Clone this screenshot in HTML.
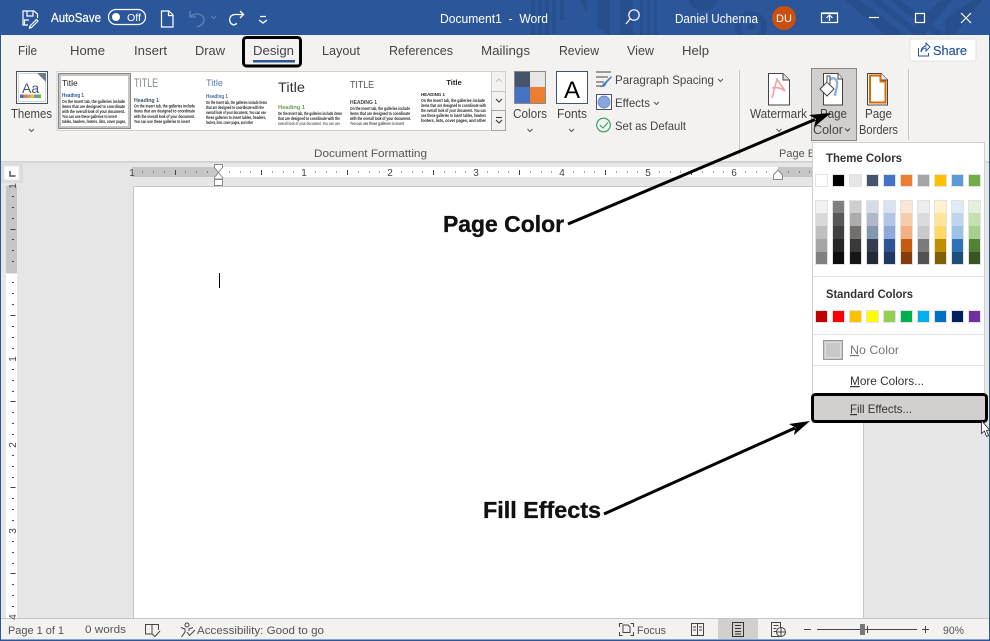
<!DOCTYPE html>
<html><head><meta charset="utf-8"><title>Word</title>
<style>
html,body{margin:0;padding:0;width:990px;height:641px;overflow:hidden;background:#e6e6e6}
svg{position:absolute;left:0;top:0;display:block}
text{font-family:"Liberation Sans",sans-serif;white-space:pre}
.t{font-size:13px;fill:#444}
.w{font-size:12.5px;fill:#fff}
.s{font-size:11px;fill:#555}
.g{font-size:4.3px;fill:#222;font-weight:bold}
.m{font-size:12px;fill:#444}
.n{font-size:10px;fill:#444}
.b{font-size:12px;fill:#333;font-weight:bold}
.a{font-size:23px;fill:#111;font-weight:bold;stroke:#111;stroke-width:.35}
</style></head><body>
<svg width="990" height="641" viewBox="0 0 990 641" xmlns="http://www.w3.org/2000/svg">
<!-- backgrounds -->
<rect width="990" height="641" fill="#e6e6e6"/>
<rect width="990" height="35" fill="#2b579a"/>

<!-- title bar pattern -->
<g fill="#284f8d">
<rect x="531" y="0" width="4" height="35"/><rect x="538" y="0" width="4" height="35"/><rect x="545" y="0" width="4" height="35"/><rect x="552" y="0" width="4" height="33"/><rect x="560" y="0" width="4" height="20"/>
<polygon points="580,0 587,0 587,14"/><polygon points="597,0 610,0 610,35 597,28"/>
<rect x="620" y="0" width="13" height="35"/><rect x="640" y="0" width="3" height="35"/><rect x="647" y="0" width="3" height="35"/><rect x="654" y="0" width="3" height="35"/>
<ellipse cx="703" cy="0" rx="14" ry="11"/>
<polygon points="845,0 860,0 905,35 885,35"/><polygon points="870,0 880,0 925,35 915,35"/><polygon points="890,0 900,0 945,35 935,35"/>
<polygon points="915,20 942,0 952,0 925,35 915,35"/><polygon points="945,20 972,0 982,0 955,35 945,35"/>
</g>
<circle cx="751" cy="27" r="13" fill="none" stroke="#284f8d" stroke-width="6"/>
<circle cx="751" cy="27" r="4" fill="#284f8d"/>

<rect y="35" width="990" height="126" fill="#f3f2f1"/>
<rect y="161" width="990" height="2" fill="#d4d4d4"/>
<rect y="618" width="990" height="23" fill="#f3f2f1"/>
<rect y="618" width="990" height="1" fill="#c6c6c6"/>
<rect y="639.5" width="990" height="1.5" fill="#2b579a"/>
<rect y="35" width="1" height="606" fill="#2b579a"/>
<rect x="989" y="35" width="1" height="606" fill="#2b579a"/>

<!-- title bar icons -->
<g fill="none" stroke="#fff" stroke-width="1.2">
<path d="M28 25H23V11H34L37.5 14V18M27 11V16H33V11M24.500 25V20H29"/>
<path d="M30 26L36.500 19.500L38 21L31.500 27.500L29.500 28Z"/>
<rect x="108.500" y="9.500" width="37" height="15" rx="7.500"/>
<path d="M161.500 11H169L173 15V27H161.500ZM168.500 11V15.500H173"/>
<path d="M232 13L228.500 16.500L232 20M229 16.500H237C244 16.500 244 26 238 27L235 25.500" stroke-width="1.300" transform="matrix(-1 0 0 1 472 -2)"/>
<path d="M260 16.500h6M259 20l4 3l4-3" stroke-width="1.300"/>
<circle cx="634" cy="15" r="5.200"/><path d="M630 19L626 24"/>
<rect x="821.500" y="13.500" width="16" height="9"/><path d="M821 13h17M829.500 21v-6M826.500 18l3-3l3 3"/>
<path d="M869 17.500h10"/>
<rect x="915.500" y="13.500" width="9" height="9"/>
<path d="M961 13l10 10M971 13l-10 10"/>
</g>
<circle cx="116" cy="17" r="4" fill="#fff"/>
<path d="M190 11v6h6M190 17C194 12 204 13 204 20C204 24 200 26 197 27" fill="none" stroke="#5e82b8" stroke-width="1.300"/>
<path d="M211 16l2.500 2.500l2.500-2.500" fill="none" stroke="#5e82b8"/>
<text x="51" y="22" class="w" textLength="50" lengthAdjust="spacingAndGlyphs" style="font-size:12.500px;stroke:#fff;stroke-width:.2">AutoSave</text>
<text x="127" y="21" style="font-size:10px;fill:#fff" textLength="14" lengthAdjust="spacingAndGlyphs">Off</text>
<text x="440" y="23" class="w" textLength="108" lengthAdjust="spacingAndGlyphs" xml:space="preserve">Document1  -  Word</text>
<text x="675" y="23" class="w" textLength="83" lengthAdjust="spacingAndGlyphs">Daniel Uchenna</text>
<circle cx="784" cy="18" r="12" fill="#ca5010"/>
<text x="784" y="22" text-anchor="middle" style="font-size:11px;fill:#fff">DU</text>

<!-- tabs -->
<text x="18" y="55" class="t" textLength="19" lengthAdjust="spacingAndGlyphs">File</text>
<text x="70" y="55" class="t" textLength="35" lengthAdjust="spacingAndGlyphs">Home</text>
<text x="134" y="55" class="t" textLength="33" lengthAdjust="spacingAndGlyphs">Insert</text>
<text x="195" y="55" class="t" textLength="30" lengthAdjust="spacingAndGlyphs">Draw</text>
<text x="253" y="55" class="t" textLength="41" lengthAdjust="spacingAndGlyphs">Design</text>
<text x="322" y="55" class="t" textLength="38" lengthAdjust="spacingAndGlyphs">Layout</text>
<text x="389" y="55" class="t" textLength="64" lengthAdjust="spacingAndGlyphs">References</text>
<text x="481" y="55" class="t" textLength="49" lengthAdjust="spacingAndGlyphs">Mailings</text>
<text x="559" y="55" class="t" textLength="40" lengthAdjust="spacingAndGlyphs">Review</text>
<text x="627" y="55" class="t" textLength="27" lengthAdjust="spacingAndGlyphs">View</text>
<text x="682" y="55" class="t" textLength="27" lengthAdjust="spacingAndGlyphs">Help</text>
<rect x="253" y="60" width="42" height="2.500" fill="#2b579a"/>
<rect x="243.500" y="37.500" width="57" height="28.500" rx="3" fill="none" stroke="#000" stroke-width="3"/>
<rect x="910" y="39" width="66" height="22" rx="2" fill="#fff" stroke="#e4e2e0"/>
<path d="M918.500 48v8h10v-3M921 52c0-4 3-6 5-6v-3l4 4l-4 4v-3c-2 0-4 1-5 4Z" fill="none" stroke="#2b579a"/>
<text x="933" y="55" class="t" textLength="34" lengthAdjust="spacingAndGlyphs" style="fill:#2b579a;font-size:13px;stroke:#2b579a;stroke-width:.2">Share</text>

<!-- Themes -->
<rect x="16.500" y="71.500" width="31" height="32" fill="#fff" stroke="#44546a"/>
<rect x="18.500" y="73.500" width="27" height="28" fill="none" stroke="#d5d5d5"/>
<polygon points="37,73 46,73 46,82" fill="#6b7a90"/>
<text x="22" y="93" style="font-size:14px;fill:#44546a">Aa</text>
<g><rect x="20" y="94.500" width="3.500" height="3.500" fill="#4472c4"/><rect x="23.500" y="94.500" width="3.500" height="3.500" fill="#ed7d31"/><rect x="27" y="94.500" width="3.500" height="3.500" fill="#a5a5a5"/><rect x="30.500" y="94.500" width="3.500" height="3.500" fill="#ffc000"/><rect x="34" y="94.500" width="3.500" height="3.500" fill="#5b9bd5"/><rect x="37.500" y="94.500" width="3.500" height="3.500" fill="#70ad47"/></g>
<text x="11" y="118" class="t" textLength="41" lengthAdjust="spacingAndGlyphs">Themes</text>
<path d="M29 129l2.500 2.500l2.500-2.500" fill="none" stroke="#555"/>

<!-- gallery -->
<rect x="57" y="71.500" width="435" height="59" fill="#fff" stroke="#d2d0ce"/>
<rect x="59.500" y="74.500" width="70" height="53" fill="none" stroke="#c4c4c4" stroke-width="3"/>
<rect x="58.500" y="73.500" width="72" height="55" fill="none" stroke="#8a8886"/>
<!-- 1 -->
<text x="62" y="86" style="font-size:8.500px;fill:#222">Title</text>
<text x="62" y="97" style="font-size:5px;fill:#2f5496;font-weight:bold" textLength="22" lengthAdjust="spacingAndGlyphs">Heading 1</text>
<text x="62" y="103" class="g" textLength="63" lengthAdjust="spacingAndGlyphs">On the Insert tab, the galleries include</text>
<text x="62" y="108" class="g" textLength="63" lengthAdjust="spacingAndGlyphs">items that are designed to coordinate</text>
<text x="62" y="113" class="g" textLength="63" lengthAdjust="spacingAndGlyphs">with the overall look of your document.</text>
<text x="62" y="118" class="g" textLength="55" lengthAdjust="spacingAndGlyphs">You can use these galleries to insert</text>
<text x="62" y="123" class="g" textLength="64" lengthAdjust="spacingAndGlyphs">tables, headers, footers, lists, cover pages,</text>
<!-- 2 -->
<text x="134" y="87" style="font-size:11.500px;fill:#808890" textLength="24" lengthAdjust="spacingAndGlyphs">TITLE</text>
<text x="134" y="102" style="font-size:5.200px;fill:#44546a;font-weight:bold" textLength="25" lengthAdjust="spacingAndGlyphs">Heading 1</text>
<text x="134" y="107.500" class="g" textLength="61" lengthAdjust="spacingAndGlyphs">On the Insert tab, the galleries include</text>
<text x="134" y="112.500" class="g" textLength="61" lengthAdjust="spacingAndGlyphs">items that are designed to coordinate</text>
<text x="134" y="118" class="g" textLength="61" lengthAdjust="spacingAndGlyphs">with the overall look of your document.</text>
<text x="134" y="123" class="g" textLength="56" lengthAdjust="spacingAndGlyphs">You can use these galleries to insert</text>
<!-- 3 -->
<text x="206" y="86" style="font-size:9px;fill:#5b7db5" textLength="17" lengthAdjust="spacingAndGlyphs">Title</text>
<text x="206" y="98" style="font-size:5px;fill:#4a6da7;font-weight:bold" textLength="22" lengthAdjust="spacingAndGlyphs">Heading 1</text>
<text x="206" y="104" class="g" textLength="61" lengthAdjust="spacingAndGlyphs">On the Insert tab, the galleries include items</text>
<text x="206" y="109" class="g" textLength="58" lengthAdjust="spacingAndGlyphs">that are designed to coordinate with the</text>
<text x="206" y="114" class="g" textLength="60" lengthAdjust="spacingAndGlyphs">overall look of your document. You can use</text>
<text x="206" y="119" class="g" textLength="60" lengthAdjust="spacingAndGlyphs">these galleries to insert tables, headers,</text>
<text x="206" y="124" class="g" textLength="47" lengthAdjust="spacingAndGlyphs">footers, lists, cover pages, and other</text>
<!-- 4 -->
<text x="278" y="92" style="font-size:14px;fill:#333" textLength="27" lengthAdjust="spacingAndGlyphs">Title</text>
<text x="278" y="109" style="font-size:5.500px;fill:#6a9a4f;font-weight:bold" textLength="27" lengthAdjust="spacingAndGlyphs">Heading 1</text>
<text x="278" y="115" class="g" textLength="64" lengthAdjust="spacingAndGlyphs">On the Insert tab, the galleries include items</text>
<text x="278" y="120" class="g" textLength="62" lengthAdjust="spacingAndGlyphs">that are designed to coordinate with the</text>
<text x="278" y="125" class="g" textLength="62" lengthAdjust="spacingAndGlyphs" opacity=".7">overall look of your document. You can use</text>
<!-- 5 -->
<text x="350" y="88" style="font-size:10.500px;fill:#555" textLength="24" lengthAdjust="spacingAndGlyphs">TITLE</text>
<text x="350" y="104" style="font-size:5.200px;fill:#444;font-weight:bold" textLength="27" lengthAdjust="spacingAndGlyphs">HEADING 1</text>
<text x="350" y="110" class="g" textLength="60" lengthAdjust="spacingAndGlyphs">On the Insert tab, the galleries include</text>
<text x="350" y="115" class="g" textLength="60" lengthAdjust="spacingAndGlyphs">items that are designed to coordinate</text>
<text x="350" y="120" class="g" textLength="61" lengthAdjust="spacingAndGlyphs">with the overall look of your document.</text>
<text x="350" y="125" class="g" textLength="54" lengthAdjust="spacingAndGlyphs" opacity=".8">You can use these galleries to insert</text>
<!-- 6 -->
<text x="454" y="85" text-anchor="middle" style="font-size:7.500px;fill:#222;font-weight:bold">Title</text>
<text x="421" y="96" style="font-size:4.500px;fill:#222;font-weight:bold" textLength="24" lengthAdjust="spacingAndGlyphs">HEADING 1</text>
<text x="421" y="102" class="g" textLength="64" lengthAdjust="spacingAndGlyphs">On the Insert tab, the galleries include</text>
<text x="421" y="107" class="g" textLength="65" lengthAdjust="spacingAndGlyphs">items that are designed to coordinate with</text>
<text x="421" y="112" class="g" textLength="65" lengthAdjust="spacingAndGlyphs">the overall look of your document. You can</text>
<text x="421" y="117" class="g" textLength="65" lengthAdjust="spacingAndGlyphs">use these galleries to insert tables, headers</text>
<text x="421" y="122" class="g" textLength="65" lengthAdjust="spacingAndGlyphs">footers, lists, cover pages, and other</text>
<!-- scroll -->
<rect x="491.500" y="71.500" width="14" height="20" fill="#f3f2f1" stroke="#d2d0ce"/>
<rect x="491.500" y="91.500" width="14" height="19" fill="#f3f2f1" stroke="#c4c4c4"/>
<rect x="491.500" y="110.500" width="14" height="20" fill="#f3f2f1" stroke="#a5a5a5"/>
<path d="M496 82l3-3l3 3" fill="none" stroke="#c2c2c2"/>
<path d="M496 99l3 3l3-3M496 117.500h6M496 120l3 3l3-3" fill="none" stroke="#333"/>
<text x="314" y="157" class="s" textLength="113" lengthAdjust="spacingAndGlyphs">Document Formatting</text>

<!-- Colors / Fonts -->
<rect x="514" y="71" width="16" height="16" fill="#44546a"/><rect x="530" y="71" width="16" height="16" fill="#e7e6e6"/>
<rect x="514" y="87" width="16" height="16" fill="#4472c4"/><rect x="530" y="87" width="16" height="16" fill="#ed7d31"/>
<rect x="514.500" y="71.500" width="31" height="32" fill="none" stroke="#8a8a8a"/>
<text x="513" y="118" class="t" textLength="34" lengthAdjust="spacingAndGlyphs">Colors</text>
<path d="M527.500 129l2.500 2.500l2.500-2.500" fill="none" stroke="#555"/>
<rect x="556.500" y="71.500" width="31" height="32" fill="#fff" stroke="#44546a"/>
<text x="572" y="98" text-anchor="middle" style="font-size:24px;fill:#000">A</text>
<text x="557" y="118" class="t" textLength="30" lengthAdjust="spacingAndGlyphs">Fonts</text>
<path d="M569 129l2.500 2.500l2.500-2.500" fill="none" stroke="#555"/>

<!-- Paragraph spacing etc -->
<path d="M596 72h15M596 77h12M596 82h8M596 86h5" fill="none" stroke="#444"/>
<path d="M611 76L604 83L600 87L602 87C604 87 606 86 606 84L612 77Z" fill="#4a80c8"/>
<text x="615" y="84" class="m" textLength="99" lengthAdjust="spacingAndGlyphs">Paragraph Spacing</text>
<path d="M718 79l2.500 2.500l2.500-2.500" fill="none" stroke="#555"/>
<rect x="596.500" y="94.500" width="15" height="15" fill="#fff" stroke="#44546a"/>
<circle cx="604" cy="102" r="6" fill="#8ba4dc" stroke="#5b7fc7" stroke-width=".7"/>
<text x="615" y="107" class="m" textLength="35" lengthAdjust="spacingAndGlyphs">Effects</text>
<path d="M654 102l2.500 2.500l2.500-2.500" fill="none" stroke="#555"/>
<circle cx="603.500" cy="125" r="6.800" fill="none" stroke="#2e9e5b" stroke-width="1.100"/>
<path d="M600 125l3 3l5-5.500" fill="none" stroke="#2e9e5b"/>
<text x="615" y="130" class="m" textLength="71" lengthAdjust="spacingAndGlyphs">Set as Default</text>

<!-- separators -->
<path d="M739.500 70v85M908.500 69v71" stroke="#c8c6c4" fill="none"/>

<!-- Watermark -->
<path d="M768.500 73.500H783L789.500 80V105H768.500Z" fill="#fff" stroke="#444"/>
<path d="M783 73.500V80H789.500" fill="#ddd" stroke="#444"/>
<path d="M772 98L777 79L785 91C781 88 776 87 772 88" fill="none" stroke="#f4a0ac" stroke-width="1.600"/>
<text x="750" y="118" class="t" textLength="57" lengthAdjust="spacingAndGlyphs">Watermark</text>
<path d="M776.500 129l2.500 2.500l2.500-2.500" fill="none" stroke="#555"/>
<text x="779" y="157" class="s">Page Background</text>

<!-- Page Color -->
<rect x="811.500" y="68.500" width="45" height="72" fill="#d2d0ce" stroke="#8a8886"/>
<path d="M823.500 73.500H838L842.500 79V105H823.500Z" fill="#fff" stroke="#444"/>
<path d="M838 73.500V79H842.500" fill="#eee" stroke="#444"/>
<path d="M827 83C829 78 836 76 837 82C838 87 835 92 835 96" fill="none" stroke="#8cb6df" stroke-width="2.500"/>
<path d="M820 89L827 82L834 89L827 96Z" fill="#fff" stroke="#444"/>
<path d="M827 82V76h3v8" fill="#fff" stroke="#444"/>
<text x="820" y="118" class="t" textLength="27" lengthAdjust="spacingAndGlyphs">Page</text>
<text x="813" y="134" class="t" textLength="30" lengthAdjust="spacingAndGlyphs">Color</text>
<path d="M845 128.500l2.500 2.500l2.500-2.500" fill="none" stroke="#444"/>

<!-- Page Borders -->
<path d="M867.500 73.500H881L887.500 80V105H867.500Z" fill="#fff" stroke="#444"/>
<path d="M881 73.500V80H887.500" fill="#eee" stroke="#444"/>
<path d="M870 102.500V75.500H880.500V81.500H885.500V102.500Z" fill="none" stroke="#d86a00" stroke-width="2"/>
<text x="865" y="118" class="t" textLength="27" lengthAdjust="spacingAndGlyphs">Page</text>
<text x="859" y="134" class="t" textLength="39" lengthAdjust="spacingAndGlyphs">Borders</text>

<!-- tab selector -->
<rect x="1" y="162" width="22" height="21" fill="#dcdcdc"/>
<rect x="4" y="166" width="15" height="14" fill="#fff" stroke="#e6e6e6"/>
<path d="M10 171v5h5.500" fill="none" stroke="#555" stroke-width="1.500"/>

<!-- horizontal ruler -->
<rect x="132" y="167" width="86" height="10" fill="#c6c6c6"/>
<rect x="218" y="167" width="560" height="10" fill="#fff"/>
<rect x="778" y="167" width="40" height="10" fill="#c6c6c6"/>
<path fill="none" stroke="#444" d="M142 172h1M153 172h1M164 172h1M185 172h1M196 172h1M207 172h1M229 172h1M240 172h1M250 172h1M272 172h1M283 172h1M293 172h1M315 172h1M326 172h1M336 172h1M358 172h1M369 172h1M379 172h1M401 172h1M412 172h1M422 172h1M444 172h1M455 172h1M465 172h1M487 172h1M498 172h1M508 172h1M530 172h1M541 172h1M551 172h1M573 172h1M584 172h1M594 172h1M616 172h1M627 172h1M637 172h1M659 172h1M670 172h1M680 172h1M702 172h1M713 172h1M723 172h1M745 172h1M756 172h1M766 172h1M788 172h1M799 172h1M809 172h1"/>
<path fill="none" stroke="#444" d="M175.500 170v5M261.500 170v5M347.500 170v5M433.500 170v5M519.500 170v5M605.500 170v5M691.500 170v5"/>
<g class="n">
<text x="132" y="176" class="n" text-anchor="middle">1</text>
<text x="304" y="176" class="n" text-anchor="middle">1</text>
<text x="390" y="176" class="n" text-anchor="middle">2</text>
<text x="476" y="176" class="n" text-anchor="middle">3</text>
<text x="562" y="176" class="n" text-anchor="middle">4</text>
<text x="648" y="176" class="n" text-anchor="middle">5</text>
<text x="734" y="176" class="n" text-anchor="middle">6</text>
</g>
<path d="M214.500 164.500h8v3l-4 5l-4-5ZM218.500 172.500l4 5v1.500h-8V177.500Z" fill="#fff" stroke="#8a8a8a"/>
<rect x="214.500" y="179.500" width="8" height="6" fill="#fff" stroke="#8a8a8a"/>
<path d="M773.500 179.500V175L778 170L782.500 175V179.500Z" fill="#fff" stroke="#8a8a8a"/>

<!-- vertical ruler -->
<rect x="6" y="186" width="11" height="87" fill="#c6c6c6"/>
<rect x="6" y="274" width="11" height="344" fill="#fff"/>
<path fill="none" stroke="#444" d="M12 196.500h2M12 207.500h2M12 218.500h2M12 239.500h2M12 250.500h2M12 261.500h2M12 282.500h2M12 293.500h2M12 304.500h2M12 326.500h2M12 337.500h2M12 348.500h2M12 369.500h2M12 380.500h2M12 391.500h2M12 412.500h2M12 423.500h2M12 434.500h2M12 455.500h2M12 466.500h2M12 477.500h2M12 498.500h2M12 509.500h2M12 520.500h2M12 541.500h2M12 552.500h2M12 563.500h2M12 584.500h2M12 595.500h2M12 606.500h2"/>
<path fill="none" stroke="#444" d="M10.500 229.500h5M10.500 315.500h5M10.500 401.500h5M10.500 487.500h5M10.500 573.500h5"/>
<g>
<text transform="translate(16,186) rotate(-90)" class="n" text-anchor="middle">1</text>
<text transform="translate(16,359) rotate(-90)" class="n" text-anchor="middle">1</text>
<text transform="translate(16,445) rotate(-90)" class="n" text-anchor="middle">2</text>
<text transform="translate(16,531) rotate(-90)" class="n" text-anchor="middle">3</text>
<text transform="translate(16,617) rotate(-90)" class="n" text-anchor="middle">4</text>
</g>

<!-- page -->
<rect x="133.500" y="186.500" width="730" height="432" fill="#fff" stroke="#c6c6c6"/>
<rect x="219" y="273" width="1" height="15" fill="#000"/>

<!-- dropdown menu -->
<rect x="812.500" y="142.500" width="172" height="280" fill="#fff" stroke="#d2d0ce"/>
<text x="826" y="162" class="b" textLength="76" lengthAdjust="spacingAndGlyphs">Theme Colors</text>
<g stroke="#e2e2e2">
<rect x="815.500" y="174.500" width="12" height="12" fill="#fff"/>
<rect x="832.500" y="174.500" width="12" height="12" fill="#000"/>
<rect x="849.500" y="174.500" width="12" height="12" fill="#e7e6e6"/>
<rect x="866.500" y="174.500" width="12" height="12" fill="#44546a"/>
<rect x="883.500" y="174.500" width="12" height="12" fill="#4472c4"/>
<rect x="900.500" y="174.500" width="12" height="12" fill="#ed7d31"/>
<rect x="917.500" y="174.500" width="12" height="12" fill="#a5a5a5"/>
<rect x="934.500" y="174.500" width="12" height="12" fill="#ffc000"/>
<rect x="951.500" y="174.500" width="12" height="12" fill="#5b9bd5"/>
<rect x="968.500" y="174.500" width="12" height="12" fill="#70ad47"/>
</g>
<g>
<rect x="815" y="200" width="13" height="13" fill="#f2f2f2"/><rect x="815" y="213" width="13" height="13" fill="#d9d9d9"/><rect x="815" y="226" width="13" height="13" fill="#bfbfbf"/><rect x="815" y="239" width="13" height="13" fill="#a6a6a6"/><rect x="815" y="252" width="13" height="13" fill="#808080"/>
<rect x="832" y="200" width="13" height="13" fill="#7f7f7f"/><rect x="832" y="213" width="13" height="13" fill="#595959"/><rect x="832" y="226" width="13" height="13" fill="#404040"/><rect x="832" y="239" width="13" height="13" fill="#262626"/><rect x="832" y="252" width="13" height="13" fill="#0d0d0d"/>
<rect x="849" y="200" width="13" height="13" fill="#d0cece"/><rect x="849" y="213" width="13" height="13" fill="#aeabab"/><rect x="849" y="226" width="13" height="13" fill="#757070"/><rect x="849" y="239" width="13" height="13" fill="#3a3838"/><rect x="849" y="252" width="13" height="13" fill="#171616"/>
<rect x="866" y="200" width="13" height="13" fill="#d6dce5"/><rect x="866" y="213" width="13" height="13" fill="#adb9ca"/><rect x="866" y="226" width="13" height="13" fill="#8497b0"/><rect x="866" y="239" width="13" height="13" fill="#333f50"/><rect x="866" y="252" width="13" height="13" fill="#222a35"/>
<rect x="883" y="200" width="13" height="13" fill="#d9e2f3"/><rect x="883" y="213" width="13" height="13" fill="#b4c6e7"/><rect x="883" y="226" width="13" height="13" fill="#8eaadb"/><rect x="883" y="239" width="13" height="13" fill="#2f5496"/><rect x="883" y="252" width="13" height="13" fill="#1f3864"/>
<rect x="900" y="200" width="13" height="13" fill="#fbe5d5"/><rect x="900" y="213" width="13" height="13" fill="#f7cbac"/><rect x="900" y="226" width="13" height="13" fill="#f4b083"/><rect x="900" y="239" width="13" height="13" fill="#c55a11"/><rect x="900" y="252" width="13" height="13" fill="#833c0b"/>
<rect x="917" y="200" width="13" height="13" fill="#ededed"/><rect x="917" y="213" width="13" height="13" fill="#dbdbdb"/><rect x="917" y="226" width="13" height="13" fill="#c9c9c9"/><rect x="917" y="239" width="13" height="13" fill="#7b7b7b"/><rect x="917" y="252" width="13" height="13" fill="#525252"/>
<rect x="934" y="200" width="13" height="13" fill="#fff2cc"/><rect x="934" y="213" width="13" height="13" fill="#ffe599"/><rect x="934" y="226" width="13" height="13" fill="#ffd966"/><rect x="934" y="239" width="13" height="13" fill="#bf8f00"/><rect x="934" y="252" width="13" height="13" fill="#7f6000"/>
<rect x="951" y="200" width="13" height="13" fill="#deeaf6"/><rect x="951" y="213" width="13" height="13" fill="#bdd6ee"/><rect x="951" y="226" width="13" height="13" fill="#9cc2e5"/><rect x="951" y="239" width="13" height="13" fill="#2e74b5"/><rect x="951" y="252" width="13" height="13" fill="#1f4e79"/>
<rect x="968" y="200" width="13" height="13" fill="#e2efd9"/><rect x="968" y="213" width="13" height="13" fill="#c5e0b3"/><rect x="968" y="226" width="13" height="13" fill="#a8d08d"/><rect x="968" y="239" width="13" height="13" fill="#538135"/><rect x="968" y="252" width="13" height="13" fill="#385623"/>
</g>
<g fill="none" stroke="#e2e2e2">
<rect x="815.500" y="200.500" width="12" height="64"/><rect x="832.500" y="200.500" width="12" height="64"/><rect x="849.500" y="200.500" width="12" height="64"/><rect x="866.500" y="200.500" width="12" height="64"/><rect x="883.500" y="200.500" width="12" height="64"/><rect x="900.500" y="200.500" width="12" height="64"/><rect x="917.500" y="200.500" width="12" height="64"/><rect x="934.500" y="200.500" width="12" height="64"/><rect x="951.500" y="200.500" width="12" height="64"/><rect x="968.500" y="200.500" width="12" height="64"/>
<path d="M813 276.500h171M813 334.500h171M813 365.500h171"/>
</g>
<text x="826" y="298" class="b" textLength="87" lengthAdjust="spacingAndGlyphs">Standard Colors</text>
<g stroke="#e2e2e2">
<rect x="815.500" y="310.500" width="12" height="12" fill="#c00000"/>
<rect x="832.500" y="310.500" width="12" height="12" fill="#ff0000"/>
<rect x="849.500" y="310.500" width="12" height="12" fill="#ffc000"/>
<rect x="866.500" y="310.500" width="12" height="12" fill="#ffff00"/>
<rect x="883.500" y="310.500" width="12" height="12" fill="#92d050"/>
<rect x="900.500" y="310.500" width="12" height="12" fill="#00b050"/>
<rect x="917.500" y="310.500" width="12" height="12" fill="#00b0f0"/>
<rect x="934.500" y="310.500" width="12" height="12" fill="#0070c0"/>
<rect x="951.500" y="310.500" width="12" height="12" fill="#002060"/>
<rect x="968.500" y="310.500" width="12" height="12" fill="#7030a0"/>
</g>
<rect x="823.500" y="340.500" width="19" height="19" fill="#c8c8c8" stroke="#999"/>
<rect x="825.500" y="342.500" width="15" height="15" fill="none" stroke="#e0e0e0"/>
<text x="850" y="354" class="m" textLength="49" lengthAdjust="spacingAndGlyphs" style="fill:#777"><tspan text-decoration="underline">N</tspan>o Color</text>
<text x="850" y="385" class="m" textLength="74" lengthAdjust="spacingAndGlyphs" style="fill:#333"><tspan text-decoration="underline">M</tspan>ore Colors...</text>
<rect x="812.500" y="394.500" width="174" height="27" rx="3" fill="#d2d0ce" stroke="#000" stroke-width="3"/>
<text x="850" y="413" class="m" textLength="62" lengthAdjust="spacingAndGlyphs" style="fill:#333"><tspan text-decoration="underline">F</tspan>ill Effects...</text>
<!-- cursor -->
<path d="M981.500 420.500V433.500L984.500 431L986.500 436.500L988.500 435.500L986.500 430.500L989.500 430Z" fill="#fff" stroke="#222" stroke-width=".8"/>

<!-- annotations -->
<text x="443" y="232" class="a" textLength="121" lengthAdjust="spacingAndGlyphs">Page Color</text>
<text x="483" y="518" class="a" textLength="118" lengthAdjust="spacingAndGlyphs">Fill Effects</text>
<path d="M568 224L815 119.500" stroke="#000" stroke-width="3" fill="none"/>
<polygon points="831,113 814,127 816,119 809,115"/>
<path d="M604 514L795 428" stroke="#000" stroke-width="3" fill="none"/>
<polygon points="810,421 794,435 795.500,427.500 789,424"/>

<!-- status bar -->
<text x="8" y="634" class="s" textLength="56" lengthAdjust="spacingAndGlyphs">Page 1 of 1</text>
<text x="85" y="633" class="s" textLength="41" lengthAdjust="spacingAndGlyphs">0 words</text>
<path d="M145.500 624.500H152V634H145.500ZM152 624.500H158.500V630M152 634L155 636.500L160 631" fill="none" stroke="#444"/>
<circle cx="187" cy="625" r="2" fill="none" stroke="#444"/>
<path d="M181 627.500L185 629V632L181.500 637M193 627.500L189 629V631M187 632l2.500 3.500L195 630" fill="none" stroke="#444"/>
<text x="197" y="634" class="s" textLength="127" lengthAdjust="spacingAndGlyphs">Accessibility: Good to go</text>
<path d="M619.500 627v-3.500h3M630.500 623.500h3v3.500M619.500 632v3.500h3M630.500 635.500h3V632M623 632.500V625h5l2 2v5.500Z" fill="none" stroke="#444"/>
<text x="637" y="634" class="s" textLength="29" lengthAdjust="spacingAndGlyphs">Focus</text>
<path d="M691.500 623.500h6v12h-6ZM697.500 623.500h6v12h-6ZM693 627h3M693 630h3M699 627h3M699 630h3" fill="none" stroke="#444"/>
<rect x="718" y="619" width="40" height="20" fill="#d2d0ce"/>
<path d="M732.500 622.500h11v14h-11ZM735 625.500h6M735 628.500h6M735 631.500h6M735 634h6" fill="none" stroke="#333"/>
<path d="M771.500 622.500h9v14h-9ZM773.500 625.500h5M773.500 628.500h3M773.500 631.500h3" fill="none" stroke="#444"/>
<circle cx="781" cy="632" r="4.500" fill="#f3f2f1" stroke="#444"/>
<path d="M776.500 632h9M781 627.500v9" stroke="#444" fill="none"/>
<path d="M804 629.500h7M817 629.500h100M867.500 626v7M922 629.500h7M925.500 626v7" stroke="#444" fill="none"/>
<rect x="860" y="624" width="5" height="11" fill="#777"/>
<text x="943" y="634" class="s" textLength="21" lengthAdjust="spacingAndGlyphs">90%</text>
</svg>
</body></html>
